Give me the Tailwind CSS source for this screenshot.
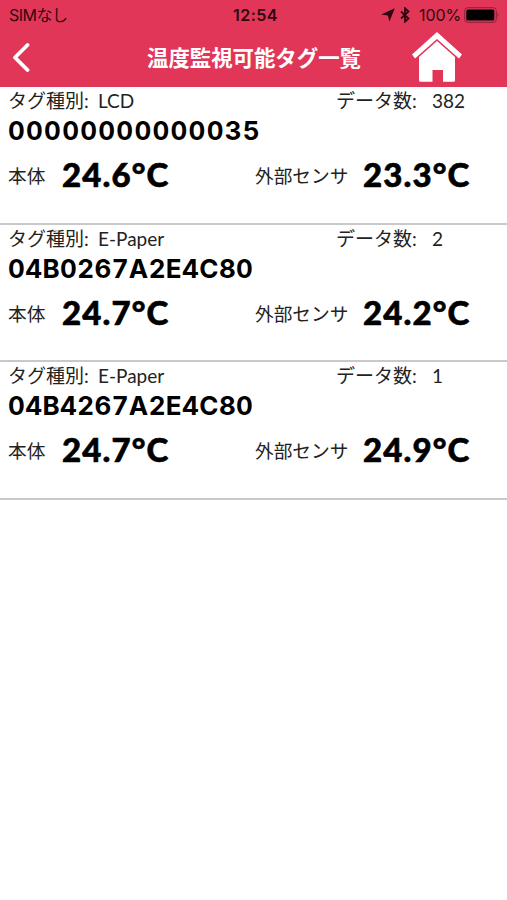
<!DOCTYPE html>
<html lang="ja">
	<head>
		<meta charset="UTF-8" />
		<meta name="viewport" content="width=device-width, initial-scale=1.0" />
		<title>温度監視可能タグ一覧</title>
		<script src="https://cdn.jsdelivr.net/npm/@tailwindcss/browser@4"></script>
	</head>
	<body class="bg-white text-black h-[900px] overflow-hidden font-['Lato','Noto_Sans_CJK_JP',sans-serif]">
		<header class="h-[87px] bg-[#e23659]">
			<!-- ステータスバー -->
			<div class="grid grid-cols-3 items-center h-[30px] pl-[9px] pr-[7px] text-[#30070f] font-['Inter','Noto_Sans_CJK_JP',sans-serif]">
				<span class="text-[16px] tracking-[-0.5px]">SIMなし</span>
				<span class="pl-[2px] text-[16px] font-semibold text-center tracking-[0.5px]">12:54</span>
				<div class="flex items-center justify-end">
					<svg class="w-[14px] h-[14px] mr-[5px]" viewBox="0 0 13 13">
						<path d="M12.8 .2 7.8 12.8 6.5 6.9 .2 6.1Z" fill="currentColor" />
					</svg>
					<svg class="w-[10px] h-[16px] mr-[9px]" viewBox="0 0 10 16">
						<path d="M1 4.5 8.5 11.5 5 14.7V1.3L8.5 4.5 1 11.5" fill="none" stroke="currentColor" stroke-width="1.8" />
					</svg>
					<span class="text-[16px] tracking-[-0.1px] mr-[3px]">100%</span>
					<svg class="w-[36px] h-[16px] shrink-0" viewBox="0 0 36 16">
						<rect x=".7" y=".7" width="31.6" height="14.6" rx="3" fill="none" stroke="#8e2038" />
						<rect x="2.3" y="2.5" width="28" height="11" rx="1.5" fill="#000" />
						<path d="M33.5 5.5q2 2.5 0 5Z" fill="#8e2038" />
					</svg>
				</div>
			</div>
			<!-- ナビゲーション -->
			<div class="flex items-start h-[57px]">
				<svg class="w-[20px] h-[30px] ml-[11px] mt-[12px]" viewBox="0 0 20 30">
					<path d="M16.5 3 4 15.5 16.5 28" fill="none" stroke="#fff" stroke-width="3.8" stroke-linecap="round" stroke-linejoin="round" />
				</svg>
				<h1 class="ml-[116px] w-[216px] mt-[12px] text-[21.4px] leading-[30px] font-bold text-white whitespace-nowrap font-['Noto_Sans_CJK_JP',sans-serif]">温度監視可能タグ一覧</h1>
				<svg class="w-[50px] h-[50px] ml-[49px] mt-[2px]" viewBox="0 0 50 50" fill="#fff">
					<path d="M25 0 50 22.5 47 26.5 25 7 3 26.5 0 22.5Z" />
					<path d="M25 9 43 25V48.2a1.5 1.5 0 0 1-1.5 1.5H31V38H20.5V49.7H8.5A1.5 1.5 0 0 1 7 48.2V25Z" />
				</svg>
			</div>
		</header>

		<!-- タグ一覧 -->
		<main>
			<section class="h-[137.5px] border-b-2 border-[#c9c9c9] px-2">
				<div class="flex h-[28px] leading-[28px] text-[19px] text-[#222]">
					<span class="w-[90px]">タグ種別:</span>
					<span class="w-[238px]">LCD</span>
					<span class="w-[96px]">データ数:</span>
					<span>382</span>
				</div>
				<div class="h-[32px] leading-[32px] text-[26px] font-bold tabular-nums tracking-[1.25px] font-['Inter',sans-serif]">00000000000035</div>
				<div class="flex h-[58px] leading-[58px] text-[18.7px] text-[#222]">
					<span class="w-[54px]">本体</span>
					<span class="w-[193px] text-[33px] leading-[55px] font-black tracking-[1.1px] text-black [-webkit-text-stroke:0.6px_black]">24.6°C</span>
					<span class="w-[108px]">外部センサ</span>
					<span class="text-[33px] leading-[55px] font-black tracking-[1.1px] text-black [-webkit-text-stroke:0.6px_black]">23.3°C</span>
				</div>
			</section>
			<section class="h-[137.5px] border-b-2 border-[#c9c9c9] px-2">
				<div class="flex h-[28px] leading-[28px] text-[19px] text-[#222]">
					<span class="w-[90px]">タグ種別:</span>
					<span class="w-[238px]">E-Paper</span>
					<span class="w-[96px]">データ数:</span>
					<span>2</span>
				</div>
				<div class="h-[32px] leading-[32px] text-[26px] font-bold tabular-nums tracking-[0.4px] font-['Inter',sans-serif]">04B0267A2E4C80</div>
				<div class="flex h-[58px] leading-[58px] text-[18.7px] text-[#222]">
					<span class="w-[54px]">本体</span>
					<span class="w-[193px] text-[33px] leading-[55px] font-black tracking-[1.1px] text-black [-webkit-text-stroke:0.6px_black]">24.7°C</span>
					<span class="w-[108px]">外部センサ</span>
					<span class="text-[33px] leading-[55px] font-black tracking-[1.1px] text-black [-webkit-text-stroke:0.6px_black]">24.2°C</span>
				</div>
			</section>
			<section class="h-[137.5px] border-b-2 border-[#c9c9c9] px-2">
				<div class="flex h-[28px] leading-[28px] text-[19px] text-[#222]">
					<span class="w-[90px]">タグ種別:</span>
					<span class="w-[238px]">E-Paper</span>
					<span class="w-[96px]">データ数:</span>
					<span>1</span>
				</div>
				<div class="h-[32px] leading-[32px] text-[26px] font-bold tabular-nums tracking-[0.4px] font-['Inter',sans-serif]">04B4267A2E4C80</div>
				<div class="flex h-[58px] leading-[58px] text-[18.7px] text-[#222]">
					<span class="w-[54px]">本体</span>
					<span class="w-[193px] text-[33px] leading-[55px] font-black tracking-[1.1px] text-black [-webkit-text-stroke:0.6px_black]">24.7°C</span>
					<span class="w-[108px]">外部センサ</span>
					<span class="text-[33px] leading-[55px] font-black tracking-[1.1px] text-black [-webkit-text-stroke:0.6px_black]">24.9°C</span>
				</div>
			</section>
		</main>
	</body>
</html>
